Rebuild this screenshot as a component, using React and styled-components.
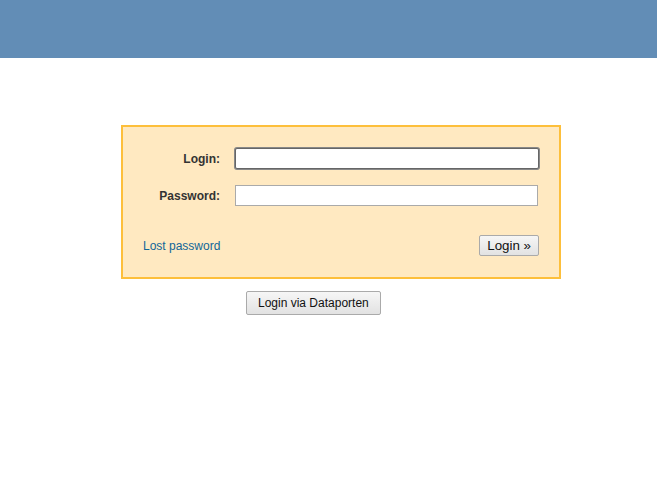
import { createGlobalStyle, styled } from "styled-components"

const Global = createGlobalStyle`
    body{
        margin: 0;
        background: #fff;
        font-family: "Liberation Sans", Arial, sans-serif;
        font-size: 12px;
        color: #333;
    }
`

const Header = styled.div`
    height: 58px;
    background-color: #628db6;
`

const Main = styled.div`
    padding: 67px 0 0 121px;
`

const LoginBox = styled.form`
    box-sizing: content-box;
    width: 397px;
    border: 2px solid #fdbf3b;
    background-color: #ffe9c1;
    padding: 21px 19px 21px 20px;
    .fields{
        display: grid;
        grid-template-columns: 77px 304px;
        column-gap: 15px;
        row-gap: 16px;
        align-items: center;
    }
    .footer{
        margin-top: 29px;
        display: flex;
        justify-content: space-between;
        align-items: center;
        padding-right: 1px;
    }
`

const Label = styled.label`
    text-align: right;
    font-weight: bold;
    color: #333;
`

const Input = styled.input`
    box-sizing: border-box;
    width: ${p => p.$focused ? "304px" : "303px"};
    height: 21px;
    margin: 0;
    padding: 2px 3px;
    border: 1px solid ${p => p.$focused ? "#666" : "#aaa"};
    border-radius: ${p => p.$focused ? "2px" : "0"};
    box-shadow: ${p => p.$focused ? "0 0 0 1px #888" : "none"};
    outline: none;
    background: #fff;
    font-family: "Liberation Sans", Arial, sans-serif;
    font-size: 12px;
    caret-color: #000;
`

const Link = styled.a`
    color: #169;
    text-decoration: none;
`

const Button = styled.button`
    box-sizing: border-box;
    height: ${p => p.$big ? "24px" : "21px"};
    padding: ${p => p.$big ? "0 11px" : "0 7px"};
    margin: 0;
    border: 1px solid #aaa;
    border-radius: 2px;
    background: linear-gradient(#f6f6f6, #e2e2e2);
    color: #111;
    font-family: "Liberation Sans", Arial, sans-serif;
    font-size: ${p => p.$big ? "12px" : "13.33px"};
    line-height: 1;
    cursor: pointer;
`

const ExtraLogin = styled.div`
    margin: 12px 0 0 125px;
`

const App = () => {
    return (
        <>
            <Global />
            <Header />
            <Main>
                <LoginBox onSubmit={e => e.preventDefault()}>
                    <div className="fields">
                        <Label htmlFor="username">Login:</Label>
                        <Input id="username" type="text" $focused autoFocus />
                        <Label htmlFor="password">Password:</Label>
                        <Input id="password" type="password" />
                    </div>
                    <div className="footer">
                        <Link href="#">Lost password</Link>
                        <Button type="submit">Login »</Button>
                    </div>
                </LoginBox>
                <ExtraLogin>
                    <Button $big type="button">Login via Dataporten</Button>
                </ExtraLogin>
            </Main>
        </>
    )
}

export default App
